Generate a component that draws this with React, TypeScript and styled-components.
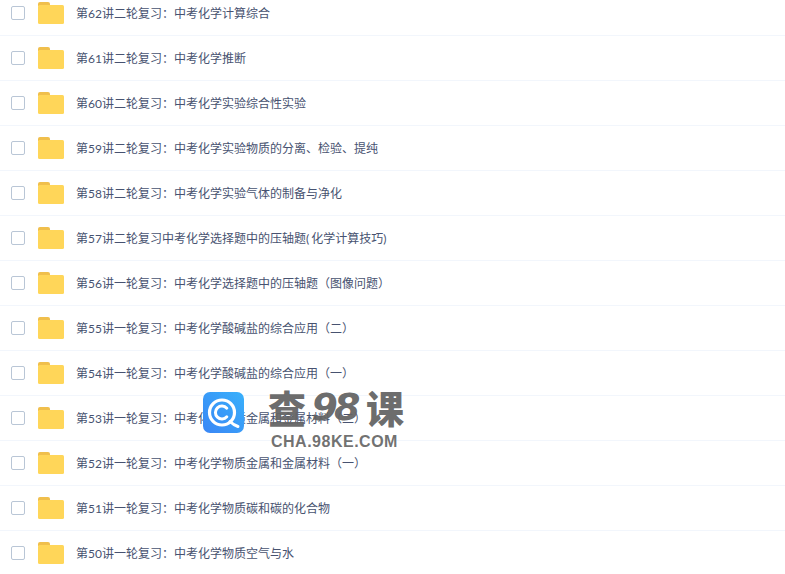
import React from 'react';
import styled, { createGlobalStyle } from 'styled-components';

const GlobalStyle = createGlobalStyle`
  html, body {
    margin: 0;
    padding: 0;
    background: #fff;
    overflow: hidden;
  }
`
const Page = styled.div`
  position: relative;
  width: 785px;
  height: 574px;
  overflow: hidden;
  font-family: Lato, "Noto Sans CJK SC", sans-serif;
`
const List = styled.ul`
  list-style: none;
  margin: -9px 0 0;
  padding: 0;
`
const Row = styled.li`
  display: flex;
  align-items: center;
  box-sizing: border-box;
  height: 45px;
  padding-left: 11px;
  border-bottom: 1px solid #f2f6fc;
`
const Check = styled.span`
  box-sizing: border-box;
  width: 14px;
  height: 14px;
  border: 1px solid #b9c6d6;
  border-radius: 2px;
  background: #fff;
  margin-right: 13px;
`
const FolderIcon = styled.svg`
  display: block;
  width: 26px;
  height: 22px;
  margin-right: 12px;
`
const Name = styled.span`
  font-size: 12px;
  line-height: 16px;
  color: #475270;
  white-space: nowrap;
  padding-top: 2px;
`
const Paren = styled.span`
  letter-spacing: 2px;
`
const Watermark = styled.div`
  position: absolute;
  left: 203px;
  top: 385px;
  display: flex;
  align-items: flex-start;
`
const LogoIcon = styled.svg`
  display: block;
  width: 41px;
  height: 41px;
  margin: 7px 24px 0 0;
`
const Brand = styled.div`
  display: flex;
  flex-direction: column;
  width: 136px;
`
const BrandTitle = styled.div`
  display: flex;
  justify-content: space-between;
  align-items: center;
  height: 44px;
  font-family: "Noto Sans CJK SC", sans-serif;
  font-size: 38px;
  line-height: 44px;
  font-weight: 900;
  color: rgba(100, 100, 100, 0.95);
  white-space: nowrap;
`
const BrandDigits = styled.span`
  font-family: "DejaVu Sans", sans-serif;
  font-size: 38px;
  font-style: italic;
  font-weight: 700;
  letter-spacing: -4px;
  margin-right: 4px;
`
const BrandUrl = styled.div`
  font-family: "Liberation Sans", sans-serif;
  font-size: 16px;
  line-height: 18px;
  font-weight: 700;
  letter-spacing: 0.5px;
  color: rgba(100, 100, 100, 0.92);
  margin: 4px 0 0 3px;
  white-space: nowrap;
`

const lessons: React.ReactNode[] = [
  '第62讲二轮复习：中考化学计算综合',
  '第61讲二轮复习：中考化学推断',
  '第60讲二轮复习：中考化学实验综合性实验',
  '第59讲二轮复习：中考化学实验物质的分离、检验、提纯',
  '第58讲二轮复习：中考化学实验气体的制备与净化',
  <>第57讲二轮复习中考化学选择题中的压轴题<Paren>(</Paren>化学计算技巧<Paren>)</Paren></>,
  '第56讲一轮复习：中考化学选择题中的压轴题（图像问题）',
  '第55讲一轮复习：中考化学酸碱盐的综合应用（二）',
  '第54讲一轮复习：中考化学酸碱盐的综合应用（一）',
  '第53讲一轮复习：中考化学物质金属和金属材料（二）',
  '第52讲一轮复习：中考化学物质金属和金属材料（一）',
  '第51讲一轮复习：中考化学物质碳和碳的化合物',
  '第50讲一轮复习：中考化学物质空气与水',
]

const Folder = () => (
  <FolderIcon viewBox="0 0 26 22">
    <path d="M0 2a2 2 0 0 1 2-2h8a2 2 0 0 1 2 2v2H0z" fill="#f0bf4c" />
    <rect x="0" y="3" width="26" height="19" rx="1.5" fill="#ffd659" />
  </FolderIcon>
)

const Logo = () => (
  <LogoIcon viewBox="0 0 41 41">
    <defs>
      <linearGradient id="logoBg" x1="0" y1="1" x2="1" y2="0">
        <stop offset="0" stopColor="#3a86f5" />
        <stop offset="1" stopColor="#38b0fb" />
      </linearGradient>
    </defs>
    <rect width="41" height="41" rx="7" fill="url(#logoBg)" />
    <circle cx="19" cy="20.5" r="12.5" fill="none" stroke="#fff" strokeWidth="3.2" />
    <path d="M23.8 16.2a6.5 6.5 0 1 0 0 8.6" fill="none" stroke="#fff" strokeWidth="3" strokeLinecap="round" />
    <path d="M27 29.5q3.5 3.5 8 5" fill="none" stroke="#fff" strokeWidth="3" strokeLinecap="round" />
  </LogoIcon>
)

export default function App() {
  return (
    <Page>
      <GlobalStyle />
      <List>
        {lessons.map((name, i) => (
          <Row key={i}>
            <Check />
            <Folder />
            <Name>{name}</Name>
          </Row>
        ))}
      </List>
      <Watermark>
        <Logo />
        <Brand>
          <BrandTitle>
            <span>查</span>
            <BrandDigits>98</BrandDigits>
            <span>课</span>
          </BrandTitle>
          <BrandUrl>CHA.98KE.COM</BrandUrl>
        </Brand>
      </Watermark>
    </Page>
  )
}
